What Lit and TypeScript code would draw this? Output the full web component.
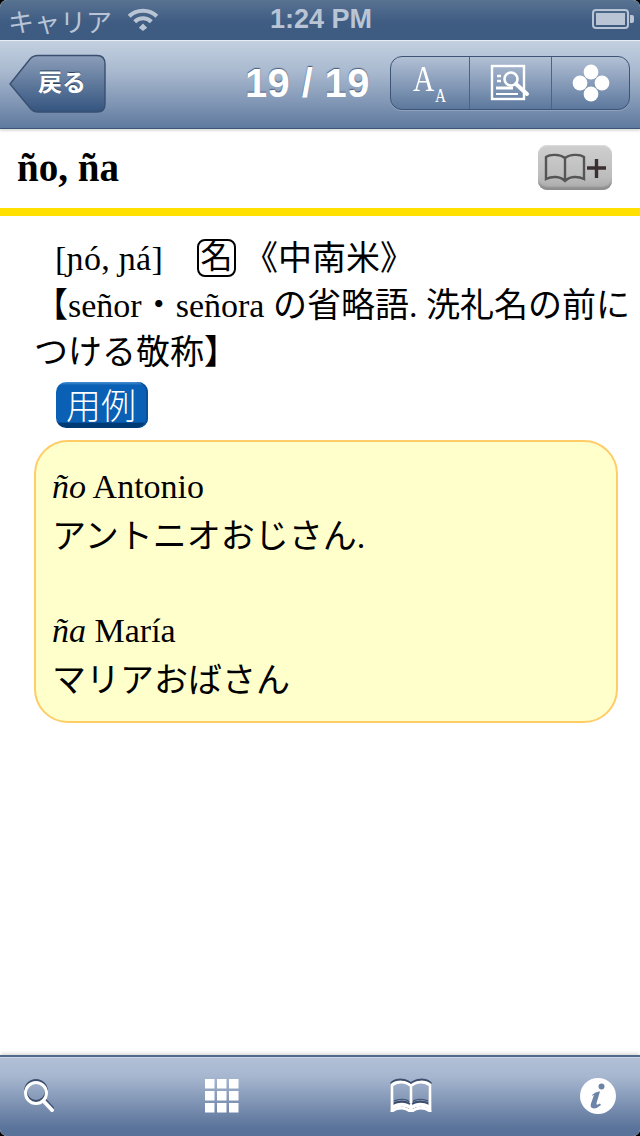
import { LitElement, html, css, svg } from "lit";
import { customElement } from "lit/decorators.js";

@customElement("app-root")
export class AppRoot extends LitElement {
  static styles = css`
    :host { display: block; width: 640px; height: 1136px; background: #000; }
    * { box-sizing: border-box; }
    .screen { width: 640px; height: 1136px; display: flex; flex-direction: column; background: #fff; border-radius: 7px; overflow: hidden; font-family: "Liberation Serif", "Noto Sans CJK JP", serif; color: #000; }
    .status { height: 40px; flex: none; background: linear-gradient(#587291, #3f5c83 55%, #3d5a80); display: grid; grid-template-columns: 1fr auto 1fr; align-items: center; padding: 0 6px 0 8px; color: #b9c5d5; font-family: "Liberation Sans", "Noto Sans CJK JP", sans-serif; font-weight: 700; font-size: 27px; }
    .status-left { display: flex; align-items: center; gap: 15px; font-weight: 400; font-size: 26px; white-space: nowrap; }
    .status-left svg { margin-top: -3px; }
    .time { margin-top: -2px; }
    .battery { justify-self: end; display: flex; margin-top: -3px; }
    .nav { height: 88px; flex: none; border-top: 1px solid #e8eef5; background: linear-gradient(#c2d0e0, #a9b9cf 35%, #5f7a9f); display: flex; align-items: center; padding: 0 0 2px 9px; box-shadow: 0 1px 0 #3e5476, 0 3px 2px #ddd; position: relative; }
    .back { width: 98px; height: 60px; display: block; flex: none; position: relative; }
    .back svg { display: block; }
    .back span { position: absolute; left: 29px; top: 9px; font-family: "Liberation Sans", "Noto Sans CJK JP", sans-serif; font-size: 24px; font-weight: 700; color: #fff; text-shadow: 0 -1px 0 #2c4263; }
    .count { margin-left: 138px; width: 130px; flex: none; font-family: "Liberation Sans", sans-serif; font-size: 40px; letter-spacing: 0.35px; font-weight: 700; color: #fff; text-shadow: 0 -1px 1px #44597a; white-space: nowrap; }
    .seg { margin-left: 15px; width: 240px; height: 54px; flex: none; display: flex; border: 1px solid #3e5476; border-radius: 12px; background: linear-gradient(#b2c0d5, #5c789d); box-shadow: 0 1px 0 #8fa3bf; margin-top: -1px; }
    .seg > div { flex: 1; display: flex; align-items: center; justify-content: center; border-left: 1px solid #4a6489; }
    .seg > div:first-child { border-left: 0; flex: 0 0 78px; }
    .seg > div:nth-child(2) { flex: 0 0 82px; }
    .aa { font-family: "Liberation Serif", serif; color: #fff; display: flex; align-items: flex-end; line-height: 1; padding-bottom: 9px; margin-left: -3px; }
    .aa b { font-weight: 400; font-size: 36px; display: block; transform: scaleX(0.82); width: 23px; text-align: center; }
    .aa i { font-style: normal; font-size: 18px; display: block; transform: scaleX(0.85) translateY(8px); width: 13px; }
    .scroll { flex: 1; min-height: 0; display: flex; flex-direction: column; }
    .head { height: 80px; flex: none; display: flex; align-items: center; justify-content: space-between; padding: 0 28px 0 17px; }
    h1 { margin: -2px 0 0; font-size: 39px; font-weight: 700; font-family: "Liberation Serif", serif; }
    .add { width: 74px; height: 45px; border-radius: 9px; background: linear-gradient(#cfcfcf, #bdbdbd 70%, #a9a9a9); box-shadow: inset 0 -4px 2px -1px #8e8e8e, inset 0 1px 1px #ddd; display: flex; align-items: center; justify-content: center; margin-top: -1px; }
    .rule { height: 8px; flex: none; background: #ffe000; }
    .body { padding: 18px 12px 0 34px; font-size: 34px; line-height: 47px; flex: 1; }
    .line { white-space: nowrap; }
    .pron { padding-left: 21px; display: flex; align-items: center; height: 48px; }
    .pron .ph { font-size: 34px; width: 142px; letter-spacing: 0.3px; }
    .noun { width: 39px; height: 38px; border: 2px solid #000; border-radius: 8px; font-size: 32px; line-height: 32px; text-align: center; flex: none; margin-right: 8px; }
    .yorei { display: flex; width: 92px; height: 46px; margin: 6px 0 0 22px; border-radius: 10px; background: linear-gradient(#4a90d4 0, #0a60b4 7%, #0a60b4 87%, #003a75 90%); box-shadow: inset -2px 0 0 #0a4f98; align-items: center; justify-content: center; color: #fff; font-size: 35px; line-height: 46px; font-family: "Noto Sans CJK JP", sans-serif; font-weight: 300; white-space: nowrap; padding: 0 2px 3px 0; }
    .box { margin-top: 12px; width: 584px; height: 283px; border: 2px solid #ffcc66; border-radius: 34px; background: #ffffcc; padding: 21px 0 0 16px; line-height: 48px; font-size: 34px; }
    .box em { font-style: italic; }
    .jp { margin: 2px 0 -2px; }
    .gap { height: 48px; }
    .tabbar { height: 81px; flex: none; border-top: 2px solid #506a8c; background: linear-gradient(#b1c0d6 0, #a6b6cf 25%, #5a739a 90%, #587198); box-shadow: inset 0 1px 0 #ccd6e4, 0 -3px 3px -1px #ddd; display: grid; grid-template-columns: repeat(4, 1fr); align-items: center; }
    .tabbar > div { display: flex; align-items: center; padding-bottom: 2px; }
    .tabbar > div:nth-child(1) { justify-content: flex-start; padding-left: 22px; }
    .tabbar > div:nth-child(2) { justify-content: flex-start; padding-left: 45px; }
    .tabbar > div:nth-child(3) { justify-content: flex-end; padding-right: 48px; }
    .tabbar > div:nth-child(4) { justify-content: flex-end; padding-right: 24px; }
    .shade { filter: drop-shadow(0 -1.5px 0 #3c4e6c); }
  `;

  render() {
    return html`<div class="screen">
      <div class="status">
        <div class="status-left"><span>キャリア</span>
          <svg width="32" height="24" viewBox="0 0 34 26" fill="none" stroke="#b9c5d5" stroke-width="4.4">
            <path d="M2 10 C10 2 24 2 32 10"/><path d="M8 16 C13 11 21 11 26 16"/>
            <path d="M12.5 22.5 L17 18 L21.5 22.5 L17 26 Z" fill="#b9c5d5" stroke="none"/>
          </svg></div>
        <div class="time">1:24 PM</div>
        <div class="battery"><svg width="42" height="20" viewBox="0 0 42 20">
          <rect x="1" y="1" width="35" height="18" rx="3" fill="none" stroke="#b9c5d5" stroke-width="2"/>
          <rect x="4" y="4" width="29" height="12" fill="#b9c5d5"/>
          <path d="M38 6h2a2 2 0 0 1 2 2v4a2 2 0 0 1-2 2h-2z" fill="#b9c5d5"/></svg></div>
      </div>
      <div class="nav">
        <div class="back">
          <svg width="98" height="60" viewBox="0 0 98 60">
            <defs><linearGradient id="bk" x1="0" y1="0" x2="0" y2="1"><stop offset="0" stop-color="#8b9eb9"/><stop offset="1" stop-color="#34547f"/></linearGradient></defs>
            <path d="M1 30 L21 5 Q24 1.5 29 1.5 H88 Q96 1.5 96 10 V50 Q96 58 88 58 H29 Q24 58 21 54 Z" fill="url(#bk)" stroke="#3a4f70" stroke-width="1.4"/>
          </svg>
          <span>戻る</span>
        </div>
        <div class="count">19 / 19</div>
        <div class="seg">
          <div><span class="aa"><b>A</b><i>A</i></span></div>
          <div><svg width="42" height="38" viewBox="0 0 42 38" fill="none" stroke="#fff">
            <rect x="2" y="2" width="32" height="33" stroke-width="2.4"/>
            <circle cx="21" cy="15" r="6.5" stroke-width="2.6"/>
            <path d="M26 20 L37 30" stroke-width="4" stroke-linecap="round"/>
            <path d="M7 12h4M7 17h4" stroke-width="2.4"/><path d="M6 24h17" stroke-width="3"/><path d="M6 30h22" stroke-width="2"/>
          </svg></div>
          <div><svg width="38" height="38" viewBox="0 0 38 38" fill="#fff">
            <circle cx="19" cy="8" r="7.4"/><circle cx="8" cy="19" r="7.4"/><circle cx="30" cy="19" r="7.4"/><circle cx="19" cy="30" r="7.4"/>
          </svg></div>
        </div>
      </div>
      <div class="scroll">
        <div class="head">
          <h1>ño, ña</h1>
          <div class="add"><svg width="64" height="36" viewBox="0 0 64 36" fill="none" stroke="#555">
            <path d="M22 8 C17 4 7 4 3 7 V29 C9 26 17 26 22 31 C27 26 35 26 41 29 V7 C37 4 27 4 22 8 V31" stroke-width="2.4"/>
            <path d="M44 18 H63 M53.5 9 V28" stroke="#3a3030" stroke-width="3.4"/>
          </svg></div>
        </div>
        <div class="rule"></div>
        <div class="body">
          <div class="line pron"><span class="ph">[ɲó, ɲá]</span><span class="noun">名</span><span>《中南米》</span></div>
          <div class="line">【señor・señora の省略語. 洗礼名の前に</div>
          <div class="line">つける敬称】</div>
          <div class="yorei">用例</div>
          <div class="box">
            <div><em>ño</em> Antonio</div>
            <div class="jp">アントニオおじさん.</div>
            <div class="gap"></div>
            <div><em>ña</em> María</div>
            <div class="jp">マリアおばさん</div>
          </div>
        </div>
      </div>
      <div class="tabbar">
        <div><svg class="shade" width="32" height="34" viewBox="0 0 32 34" fill="none" stroke="#fff">
          <circle cx="14" cy="14" r="10.5" stroke-width="3"/><path d="M21.5 22 L30 31" stroke-width="4" stroke-linecap="round"/></svg></div>
        <div><svg width="34" height="34" viewBox="0 0 34 34" fill="#fff">
          ${[0, 1, 2].flatMap((r) => [0, 1, 2].map((c) => svg`<rect x=${c * 12} y=${r * 12} width="9.5" height="9.5"/>`))}
        </svg></div>
        <div><svg class="shade" width="42" height="32" viewBox="0 0 42 32">
          <path d="M21 6 C16 1 7 1 2 5 V31 C8 27 16 27 21 32 C26 27 34 27 40 31 V5 C35 1 26 1 21 6 V30" fill="none" stroke="#fff" stroke-width="3"/>
          <path d="M3 25 C9 22 16 22 21 26 C26 22 33 22 39 25 V29 C33 26 26 26 21 30 C16 26 9 26 3 29 Z" fill="#fff"/>
          <path d="M4 23 C9 20.5 16 20.5 20 24 M22 24 C26 20.5 33 20.5 38 23" fill="none" stroke="#3c4e6c" stroke-width="1.2"/>
        </svg></div>
        <div><svg width="36" height="36" viewBox="0 0 36 36">
          <circle cx="18" cy="18" r="18" fill="#fff"/>
          <circle cx="21.5" cy="8.5" r="3" fill="#6b84a8"/>
          <path d="M12 17 Q16 13 20 13.5 L16.5 25 Q16 28 20 25.5 L21 27 Q16 31.5 12 30 Q10 28.5 11 25.5 L14 17 Q13 16.5 12.8 18 Z" fill="#6b84a8"/>
        </svg></div>
      </div>
    </div>`;
  }
}
